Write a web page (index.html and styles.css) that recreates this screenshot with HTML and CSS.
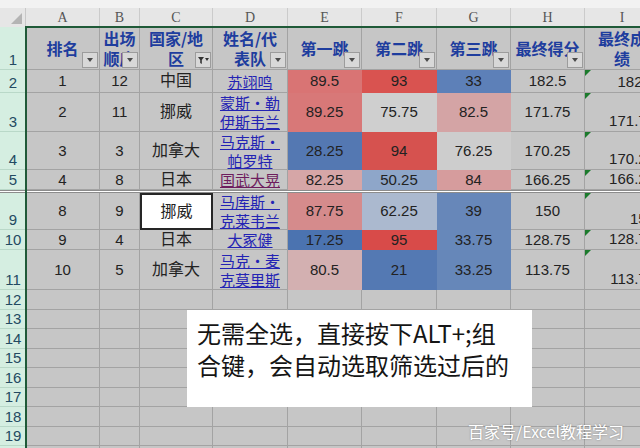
FILE: index.html
```html
<!DOCTYPE html>
<html lang="zh">
<head>
<meta charset="utf-8">
<title>Sheet</title>
<link rel="stylesheet" href="styles.css">
</head>
<body>
<div class="sheet">
  <div class="grid">
    <div class="band"></div>

    <div class="corner"></div>
    <div class="colh">A</div><div class="colh">B</div><div class="colh">C</div><div class="colh">D</div><div class="colh">E</div><div class="colh">F</div><div class="colh">G</div><div class="colh">H</div><div class="colh">I</div>

    <div class="rowh">1</div>
    <div class="c hd">排名<span class="fb"></span></div>
    <div class="c hd">出场<br>顺序<span class="fb"></span></div>
    <div class="c hd">国家/地<br>区<span class="fb fun"><svg width="14" height="14" viewBox="0 0 14 14"><path d="M2 4h6l-2.2 3v4l-1.6-1V7z" fill="#333"/><path d="M9 5h4l-2 3z" fill="#333"/></svg></span></div>
    <div class="c hd">姓名/代<br>表队<span class="fb"></span></div>
    <div class="c hd">第一跳<span class="fb"></span></div>
    <div class="c hd">第二跳<span class="fb"></span></div>
    <div class="c hd">第三跳<span class="fb"></span></div>
    <div class="c hd">最终得分<span class="fb"></span></div>
    <div class="c hd">最终成<br>绩</div>

    <div class="rowh">2</div>
    <div class="c">1</div><div class="c">12</div><div class="c zh">中国</div>
    <div class="c"><span class="nm">苏翊鸣</span></div>
    <div class="c h" style="background:#d97474">89.5</div>
    <div class="c h" style="background:#d95350">93</div>
    <div class="c h" style="background:#5d80b8">33</div>
    <div class="c">182.5</div>
    <div class="c ic tri">182.5</div>

    <div class="rowh">3</div>
    <div class="c">2</div><div class="c">11</div><div class="c zh">挪威</div>
    <div class="c"><span class="nm">蒙斯·勒<br>伊斯韦兰</span></div>
    <div class="c h" style="background:#d87878">89.25</div>
    <div class="c h" style="background:#cfcfcf">75.75</div>
    <div class="c h" style="background:#d4a4a5">82.5</div>
    <div class="c">171.75</div>
    <div class="c ic tri">171.75</div>

    <div class="rowh">4</div>
    <div class="c">3</div><div class="c">3</div><div class="c zh">加拿大</div>
    <div class="c"><span class="nm">马克斯·<br>帕罗特</span></div>
    <div class="c h" style="background:#5478b2">28.25</div>
    <div class="c h" style="background:#d6524f">94</div>
    <div class="c h" style="background:#cdcdcd">76.25</div>
    <div class="c">170.25</div>
    <div class="c ic tri">170.25</div>

    <div class="rowh">5</div>
    <div class="c">4</div><div class="c">8</div><div class="c zh">日本</div>
    <div class="c"><span class="nm vis">国武大晃</span></div>
    <div class="c h" style="background:#d6a6a7">82.25</div>
    <div class="c h" style="background:#8ea6c9">50.25</div>
    <div class="c h" style="background:#d69c9d">84</div>
    <div class="c">166.25</div>
    <div class="c ic tri">166.25</div>

    <div class="rowh sep"></div>
    <div class="sepline"></div>

    <div class="rowh">9</div>
    <div class="c">8</div><div class="c">9</div><div class="c zh act">挪威</div>
    <div class="c"><span class="nm">马库斯·<br>克莱韦兰</span></div>
    <div class="c h" style="background:#d58b8c">87.75</div>
    <div class="c h" style="background:#abb9cf">62.25</div>
    <div class="c h" style="background:#6787b9">39</div>
    <div class="c">150</div>
    <div class="c ic tri">150</div>

    <div class="rowh">10</div>
    <div class="c">9</div><div class="c">4</div><div class="c zh">日本</div>
    <div class="c"><span class="nm">大冢健</span></div>
    <div class="c h" style="background:#4b73b0">17.25</div>
    <div class="c h" style="background:#d84b49">95</div>
    <div class="c h" style="background:#6788ba">33.75</div>
    <div class="c">128.75</div>
    <div class="c ic tri">128.75</div>

    <div class="rowh">11</div>
    <div class="c">10</div><div class="c">5</div><div class="c zh">加拿大</div>
    <div class="c"><span class="nm">马克·麦<br>克莫里斯</span></div>
    <div class="c h" style="background:#d3b0b1">80.5</div>
    <div class="c h" style="background:#5479b3">21</div>
    <div class="c h" style="background:#6687b9">33.25</div>
    <div class="c">113.75</div>
    <div class="c ic tri">113.75</div>

    <div class="rowh">12</div><div class="c"></div><div class="c"></div><div class="c"></div><div class="c"></div><div class="c"></div><div class="c"></div><div class="c"></div><div class="c"></div><div class="c"></div>
    <div class="rowh">13</div><div class="c"></div><div class="c"></div><div class="c"></div><div class="c"></div><div class="c"></div><div class="c"></div><div class="c"></div><div class="c"></div><div class="c"></div>
    <div class="rowh">14</div><div class="c"></div><div class="c"></div><div class="c"></div><div class="c"></div><div class="c"></div><div class="c"></div><div class="c"></div><div class="c"></div><div class="c"></div>
    <div class="rowh">15</div><div class="c"></div><div class="c"></div><div class="c"></div><div class="c"></div><div class="c"></div><div class="c"></div><div class="c"></div><div class="c"></div><div class="c"></div>
    <div class="rowh">16</div><div class="c"></div><div class="c"></div><div class="c"></div><div class="c"></div><div class="c"></div><div class="c"></div><div class="c"></div><div class="c"></div><div class="c"></div>
    <div class="rowh">17</div><div class="c"></div><div class="c"></div><div class="c"></div><div class="c"></div><div class="c"></div><div class="c"></div><div class="c"></div><div class="c"></div><div class="c"></div>
    <div class="rowh">18</div><div class="c"></div><div class="c"></div><div class="c"></div><div class="c"></div><div class="c"></div><div class="c"></div><div class="c"></div><div class="c"></div><div class="c"></div>
    <div class="rowh">19</div><div class="c"></div><div class="c"></div><div class="c"></div><div class="c"></div><div class="c"></div><div class="c"></div><div class="c"></div><div class="c"></div><div class="c"></div>
    <div class="rowh">20</div><div class="c"></div><div class="c"></div><div class="c"></div><div class="c"></div><div class="c"></div><div class="c"></div><div class="c"></div><div class="c"></div><div class="c"></div>
  </div>

  <div class="selframe"></div>

  <div class="note">无需全选，直接按下ALT+;组<br>合键，会自动选取筛选过后的</div>
  <div class="wm">百家号/Excel教程学习</div>
</div>
</body>
</html>
```

FILE: styles.css
```css
* { box-sizing: border-box; margin: 0; padding: 0; }
html, body { width: 640px; height: 448px; overflow: hidden; background: #c6c6c6; }

.sheet { position: relative; width: 640px; height: 448px; overflow: hidden; }

.grid {
  display: grid;
  width: 660px;
  grid-template-columns: 26px 74px 40px 73px 75px 74px 75px 74px 74px 75px;
  grid-template-rows: 8px 19px 43px 23px 39px 38px 20px 3px 37px 20px 40px repeat(9, 19.5px);
}

.band { grid-column: 1 / -1; background: #f2f2f2; }

.corner { background: #e6e6e6; border-right: 1px solid #c8c8c8; position: relative; }
.corner::after {
  content: ""; position: absolute; right: 3px; bottom: 3px;
  border-left: 11px solid transparent; border-bottom: 11px solid #b4b4b4;
}

.colh {
  background: #e6e6e6; border-right: 1px solid #cbcbcb;
  display: flex; align-items: center; justify-content: center;
  font: 14px "Liberation Serif", serif; color: #555;
}

.rowh {
  background: #d5eee1; border-bottom: 1px solid #b9d8c8;
  display: flex; align-items: flex-end; justify-content: center;
  font: 15px/17px "Liberation Sans", sans-serif; color: #234a62;
  padding-bottom: 1px;
}

.c {
  position: relative;
  background: #c6c6c6;
  border-right: 1px solid #a3a3a3; border-bottom: 1px solid #a3a3a3;
  display: flex; align-items: center; justify-content: center;
  text-align: center;
  font: 15px/18px "Liberation Sans", "Noto Sans CJK SC", sans-serif; color: #222;
  white-space: nowrap;
}
.c.zh { font-size: 16px; }
.c.h { border-color: transparent; }

.hd {
  font: bold 16px/20px "Noto Sans CJK SC", sans-serif; color: #1e3d9e;
}

.fb {
  position: absolute; right: 1px; bottom: 1px;
  width: 16px; height: 16px;
  background: #d8d8d8; border: 1px solid #9c9c9c;
  display: flex; align-items: center; justify-content: center;
}
.fb::after {
  content: ""; border-left: 3.5px solid transparent; border-right: 3.5px solid transparent;
  border-top: 4px solid #4a4a4a;
}
.fb.fun::after { display: none; }

.nm {
  color: #2323b4; text-decoration: underline;
  font: 15px/19px "Noto Sans CJK SC", sans-serif;
}
.nm.vis { color: #6e1d5e; }

.act { background: #fff; border: 2px solid #262626; }

.ic { justify-content: flex-end; align-items: flex-end; padding-right: 4px; padding-bottom: 1px; }
.tri::before {
  content: ""; position: absolute; left: 0; top: 0;
  border-top: 6px solid #1b7a2c; border-right: 6px solid transparent;
}

.sep { border-bottom: none; background: #fff; border-top: 1px solid #8c8c8c; border-bottom: 1px solid #8c8c8c; }
.sepline {
  grid-column: 2 / -1;
  background: #fff; border-top: 1px solid #8c8c8c; border-bottom: 1px solid #8c8c8c;
}

.selframe {
  position: absolute; left: 25px; top: 26px; right: -4px; bottom: -4px;
  border-left: 2px solid #1f5a38; border-top: 2px solid #1f5a38;
  pointer-events: none;
}

.note {
  position: absolute; left: 187px; top: 310px; width: 345px; height: 97px;
  background: #fff;
  padding: 7px 0 0 10px;
  font: 24px/32px "Noto Sans CJK SC", sans-serif; color: #151515;
  white-space: nowrap;
}

.wm {
  position: absolute; left: 468px; top: 420px;
  font: 16px/22px "Noto Sans CJK SC", sans-serif; color: #fff;
  text-shadow: 0 0 2px rgba(0,0,0,0.35);
  white-space: nowrap;
}
```
